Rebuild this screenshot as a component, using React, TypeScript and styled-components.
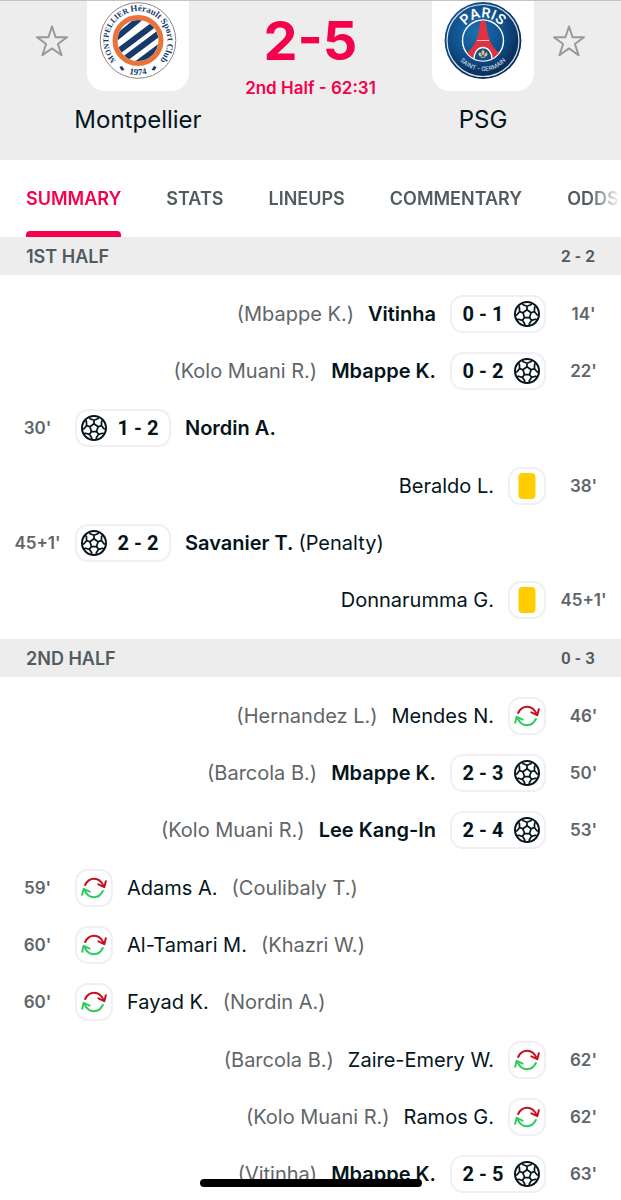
import React from "react";
import styled, { createGlobalStyle } from "styled-components";

const color = {
  ink: "#04151b",
  muted: "#5f6668",
  label: "#525b5e",
  accent: "#f5004a",
  band: "#ededed",
  line: "#f1eff1",
  card: "#ffcd00",
};

const GlobalStyle = createGlobalStyle`
  * { box-sizing: border-box; }
  html, body, #root { height: 100%; }
  body {
    margin: 0;
    background: #fff;
    color: ${color.ink};
    font-family: Inter, Roboto, "Liberation Sans", sans-serif;
  }
  button { font: inherit; color: inherit; background: none; border: 0; padding: 0; cursor: pointer; }
`;

const Screen = styled.main`
  height: 100vh;
  overflow-x: hidden;
  overflow-y: auto;
  scrollbar-width: none;
`;

const MatchHeader = styled.header`
  display: grid;
  grid-template-columns: 36px 136px 1fr 136px 36px;
  padding: 0 34px;
  height: 160px;
  background: ${color.band};
  border-top: 1px solid #c4c4c4;
`;

const StarButton = styled.button`
  height: 80px;
  display: flex;
  align-items: center;
  justify-content: center;
`;

const Team = styled.div`
  display: flex;
  flex-direction: column;
  align-items: center;
  gap: 14px;
`;

const CrestTile = styled.div`
  width: 102px;
  height: 90px;
  background: #fff;
  border-radius: 0 0 18px 18px;
  display: flex;
  justify-content: center;
`;

const TeamName = styled.h2`
  margin: 0;
  font-size: 24px;
  line-height: 30px;
  font-weight: 400;
  white-space: nowrap;
`;

const ScoreBox = styled.div`
  display: flex;
  flex-direction: column;
  align-items: center;
  padding-top: 10px;
  color: ${color.accent};
`;

const Score = styled.h1`
  margin: 0;
  font-size: 54px;
  line-height: 60px;
  font-weight: 700;
`;

const Clock = styled.p`
  margin: 6px 0 0;
  font-size: 17px;
  line-height: 22px;
  font-weight: 600;
  white-space: nowrap;
`;

const Tabs = styled.nav`
  display: flex;
  gap: 45px;
  height: 77px;
  padding-left: 26px;
  overflow: hidden;
  mask-image: linear-gradient(to left, transparent, #000 32px);
`;

const Tab = styled.button<{ $active?: boolean }>`
  flex: none;
  font-size: 18px;
  font-weight: 600;
  color: ${(p) => (p.$active ? color.accent : color.label)};
  display: flex;
  flex-direction: column;
  align-items: center;
  justify-content: center;
  position: relative;
  &::after {
    content: "";
    display: ${(p) => (p.$active ? "block" : "none")};
    position: absolute;
    left: 0;
    right: 0;
    bottom: 0;
    height: 6px;
    border-radius: 4px 4px 0 0;
    background: ${color.accent};
  }
`;

const HalfHeader = styled.h3`
  margin: 0;
  display: flex;
  align-items: center;
  justify-content: space-between;
  height: 38px;
  padding: 0 26px;
  background: ${color.band};
  color: ${color.label};
  font-size: 18px;
  font-weight: 600;
`;

const HalfScore = styled.span`
  font-family: Roboto, Inter, sans-serif;
  font-size: 17px;
`;

const Events = styled.ol`
  margin: 0;
  padding: 10px 0;
  list-style: none;
`;

const EventRow = styled.li<{ $away?: boolean }>`
  display: flex;
  flex-direction: ${(p) => (p.$away ? "row-reverse" : "row")};
  align-items: center;
  height: 57px;
  &:nth-child(3n) { height: 58px; }
`;

const Minute = styled.span`
  flex: none;
  width: 75px;
  text-align: center;
  font-size: 17px;
  font-weight: 600;
  color: ${color.muted};
`;

const Pill = styled.span<{ $away?: boolean; $wide?: boolean }>`
  flex: none;
  display: flex;
  flex-direction: ${(p) => (p.$away ? "row-reverse" : "row")};
  align-items: center;
  gap: 4px;
  width: ${(p) => (p.$wide ? "96px" : "38px")};
  height: 38px;
  padding: 0 4px;
  border: 2px solid ${color.line};
  border-radius: 13px;
`;

const PillScore = styled.span`
  flex: 1;
  text-align: center;
  font-family: Roboto, Inter, sans-serif;
  font-size: 20px;
  font-weight: 700;
`;

const Names = styled.span<{ $away?: boolean; $tight?: boolean }>`
  display: flex;
  flex-direction: ${(p) => (p.$away ? "row-reverse" : "row")};
  gap: ${(p) => (p.$tight ? "5px" : "14px")};
  padding: 0 14px;
  font-size: 20px;
  line-height: 28px;
  white-space: nowrap;
`;

const Player = styled.span<{ $bold?: boolean }>`
  font-weight: ${(p) => (p.$bold ? 600 : 400)};
`;

const Partner = styled.span<{ $dark?: boolean }>`
  color: ${(p) => (p.$dark ? color.ink : color.muted)};
`;

const HomeIndicator = styled.div`
  position: fixed;
  left: 50%;
  bottom: 13px;
  width: 222px;
  height: 8px;
  transform: translateX(-50%);
  border-radius: 4px;
  background: #000;
`;

function Star() {
  return (
    <svg width="36" height="36" viewBox="0 0 36 36" fill="none" stroke="#999" strokeWidth="2" strokeLinejoin="round">
      <path d="M18 3.5L21.6 14.2H33L23.9 21L27.6 32.2L18 25.4L8.4 32.2L12.1 21L3 14.2H14.4Z" />
    </svg>
  );
}

function BallIcon() {
  return (
    <svg width="26" height="26" viewBox="0 0 26 26" fill="none" stroke={color.ink} strokeWidth="1.7" strokeLinejoin="round">
      <circle cx="13" cy="13" r="12" strokeWidth="2" />
      <path d="M13 8.8L17.1 11.8L15.5 16.6H10.5L8.9 11.8Z" />
      {[0, 72, 144, 216, 288].map((angle) => (
        <path key={angle} transform={`rotate(${angle} 13 13)`} d="M13 8.8V5.2M8.2 2.4L9.2 3.8L13 5.2L16.8 3.8L17.8 2.4" />
      ))}
    </svg>
  );
}

function SwapIcon() {
  const arrow = "M4.2 10C6 6 9.2 3.8 13.2 3.8C17.4 3.8 20.6 6.4 22.8 11.4M24.8 6.2L23.3 12.2L17.4 9.4";
  return (
    <svg width="26" height="26" viewBox="0 0 26 26" fill="none" strokeWidth="2" strokeLinecap="round" strokeLinejoin="round">
      <path d={arrow} stroke="#c8101c" />
      <path d={arrow} stroke="#2fcb5f" transform="rotate(180 13 13)" />
    </svg>
  );
}

function CardIcon() {
  return (
    <svg width="26" height="26" viewBox="0 0 26 26">
      <rect x="4.5" y="0" width="17" height="26" rx="4" fill={color.card} />
    </svg>
  );
}

function MontpellierCrest() {
  return (
    <svg width="80" height="80" viewBox="0 0 80 80" fontFamily="Liberation Serif, serif" fontWeight="700" fill="#163a6b">
      <defs>
        <clipPath id="mhscInner"><circle cx="40" cy="39.5" r="20.5" /></clipPath>
        <path id="mhscTop" d="M19.1 60.4A29.5 29.5 0 1 1 60.9 60.4" />
        <path id="mhscBottom" d="M20 68A36 36 0 0 0 60 68" />
      </defs>
      <circle cx="40" cy="39.5" r="37.8" fill="#fff" stroke="#8f8585" strokeWidth="1" />
      <g clipPath="url(#mhscInner)" stroke="#163a6b" strokeWidth="6">
        <path d="M12 42L46 14M12 56.5L64 17.5M20 63L68 27M32 68L72 38" />
      </g>
      <circle cx="40" cy="39.5" r="23" fill="none" stroke="#e8743b" strokeWidth="5" />
      <text fontSize="7.8">
        <textPath href="#mhscTop" startOffset="50%" textAnchor="middle">MONTPELLIER <tspan fontSize="9">Hérault Sport Club</tspan></textPath>
      </text>
      <text fontSize="9">
        <textPath href="#mhscBottom" startOffset="50%" textAnchor="middle">1974</textPath>
      </text>
      <path d="M21.5 66L24 65L26.5 69L23.5 69.5ZM58.5 66L56 65L53.5 69L56.5 69.5Z" />
    </svg>
  );
}

function ParisCrest() {
  return (
    <svg width="80" height="80" viewBox="0 0 80 80" fontFamily="Inter, sans-serif" fill="#fff">
      <defs>
        <radialGradient id="psgBlue" cx="42%" cy="38%" r="62%">
          <stop offset="0" stopColor="#1e6fb0" />
          <stop offset="0.55" stopColor="#10508c" />
          <stop offset="1" stopColor="#082a52" />
        </radialGradient>
        <clipPath id="psgInner"><circle cx="40" cy="39.5" r="20" /></clipPath>
        <path id="psgTop" d="M17.2 39.5A22.8 22.8 0 0 1 62.8 39.5" />
        <path id="psgBottom" d="M9.5 39.5A30.5 30.5 0 0 0 70.5 39.5" />
      </defs>
      <circle cx="40" cy="39.5" r="38.4" fill="url(#psgBlue)" />
      <circle cx="40" cy="39.5" r="36" fill="none" stroke="#dbe6ef" strokeWidth="1.2" />
      <circle cx="40" cy="39.5" r="20.5" fill="none" stroke="#fff" strokeWidth="1.4" />
      <g clipPath="url(#psgInner)">
        <path d="M38 18H42L44.5 32C46.5 41 51 49 60 55L50 58C49 50 45 46.5 40 46.5C35 46.5 31 50 30 58L20 55C29 49 33.5 41 35.5 32Z" fill="#e2313f" />
        <path d="M34 39.5H46" stroke="#f6c7cc" strokeWidth="1" />
        <path d="M31 60C30 42 50 42 49 60" fill="#164f88" stroke="#fff" strokeWidth="1.3" />
        <path d="M40 48.5C42.5 51 41.5 53 40 54.5C38.5 53 37.5 51 40 48.5ZM36 51.5C38.5 51 38 54 39.5 55.5H37C35.5 54.5 35 53 36 51.5ZM44 51.5C41.5 51 42 54 40.5 55.5H43C44.5 54.5 45 53 44 51.5ZM38 56.2H42V57H38Z" fill="#d9c27a" />
      </g>
      <text fontSize="14" fontWeight="600">
        <textPath href="#psgTop" startOffset="50%" textAnchor="middle">PARIS</textPath>
      </text>
      <text fontSize="6" fontWeight="500" fill="#c9d7e4">
        <textPath href="#psgBottom" startOffset="50%" textAnchor="middle">SAINT - GERMAIN</textPath>
      </text>
    </svg>
  );
}

type MatchEvent = {
  minute: string;
  kind: "goal" | "card" | "swap";
  player: string;
  partner?: string;
  note?: string;
  score?: string;
  away?: boolean;
};

const halves: { title: string; score: string; events: MatchEvent[] }[] = [
  {
    title: "1ST HALF",
    score: "2 - 2",
    events: [
      { minute: "14'", kind: "goal", score: "0 - 1", player: "Vitinha", partner: "(Mbappe K.)", away: true },
      { minute: "22'", kind: "goal", score: "0 - 2", player: "Mbappe K.", partner: "(Kolo Muani R.)", away: true },
      { minute: "30'", kind: "goal", score: "1 - 2", player: "Nordin A." },
      { minute: "38'", kind: "card", player: "Beraldo L.", away: true },
      { minute: "45+1'", kind: "goal", score: "2 - 2", player: "Savanier T.", note: "(Penalty)" },
      { minute: "45+1'", kind: "card", player: "Donnarumma G.", away: true },
    ],
  },
  {
    title: "2ND HALF",
    score: "0 - 3",
    events: [
      { minute: "46'", kind: "swap", player: "Mendes N.", partner: "(Hernandez L.)", away: true },
      { minute: "50'", kind: "goal", score: "2 - 3", player: "Mbappe K.", partner: "(Barcola B.)", away: true },
      { minute: "53'", kind: "goal", score: "2 - 4", player: "Lee Kang-In", partner: "(Kolo Muani R.)", away: true },
      { minute: "59'", kind: "swap", player: "Adams A.", partner: "(Coulibaly T.)" },
      { minute: "60'", kind: "swap", player: "Al-Tamari M.", partner: "(Khazri W.)" },
      { minute: "60'", kind: "swap", player: "Fayad K.", partner: "(Nordin A.)" },
      { minute: "62'", kind: "swap", player: "Zaire-Emery W.", partner: "(Barcola B.)", away: true },
      { minute: "62'", kind: "swap", player: "Ramos G.", partner: "(Kolo Muani R.)", away: true },
      { minute: "63'", kind: "goal", score: "2 - 5", player: "Mbappe K.", partner: "(Vitinha)", away: true },
    ],
  },
];

const icons = { goal: BallIcon, card: CardIcon, swap: SwapIcon };

function EventItem({ event }: { event: MatchEvent }) {
  const Icon = icons[event.kind];
  const goal = event.kind === "goal";
  return (
    <EventRow $away={event.away}>
      <Minute>{event.minute}</Minute>
      <Pill $away={event.away} $wide={goal}>
        <Icon />
        {goal && <PillScore>{event.score}</PillScore>}
      </Pill>
      <Names $away={event.away} $tight={!!event.note}>
        <Player $bold={goal}>{event.player}</Player>
        {event.note && <Partner $dark>{event.note}</Partner>}
        {event.partner && <Partner>{event.partner}</Partner>}
      </Names>
    </EventRow>
  );
}

export default function App() {
  return (
    <>
      <GlobalStyle />
      <Screen>
        <MatchHeader>
          <StarButton aria-label="Follow Montpellier"><Star /></StarButton>
          <Team>
            <CrestTile><MontpellierCrest /></CrestTile>
            <TeamName>Montpellier</TeamName>
          </Team>
          <ScoreBox>
            <Score>2-5</Score>
            <Clock>2nd Half - 62:31</Clock>
          </ScoreBox>
          <Team>
            <CrestTile><ParisCrest /></CrestTile>
            <TeamName>PSG</TeamName>
          </Team>
          <StarButton aria-label="Follow PSG"><Star /></StarButton>
        </MatchHeader>
        <Tabs>
          {["SUMMARY", "STATS", "LINEUPS", "COMMENTARY", "ODDS"].map((name, i) => (
            <Tab key={name} $active={i === 0}>{name}</Tab>
          ))}
        </Tabs>
        {halves.map((half) => (
          <section key={half.title}>
            <HalfHeader>
              <span>{half.title}</span>
              <HalfScore>{half.score}</HalfScore>
            </HalfHeader>
            <Events>
              {half.events.map((event, i) => <EventItem key={i} event={event} />)}
            </Events>
          </section>
        ))}
      </Screen>
      <HomeIndicator />
    </>
  );
}
